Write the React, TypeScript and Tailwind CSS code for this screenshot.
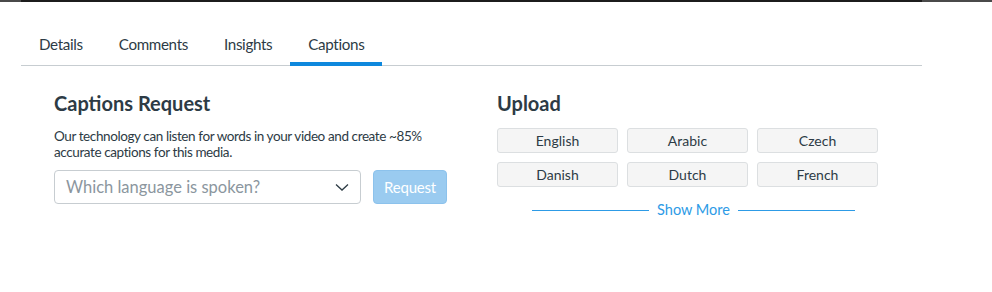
import React from 'react';

const tabs = ['Details', 'Comments', 'Insights', 'Captions'];
const languages = ['English', 'Arabic', 'Czech', 'Danish', 'Dutch', 'French'];

export default function App() {
  return (
    <div className="w-[992px] h-[292px] bg-white text-[#2d3b45] font-['Lato','Liberation_Sans',sans-serif]">
      <div className="flex h-[2px]">
        <div className="w-[21px] bg-[#4a4a4a]" />
        <div className="w-[901px] bg-[#1c1c1c]" />
        <div className="flex-1 bg-[#4a4a4a]" />
      </div>

      <div className="ml-[21px] w-[901px] mt-[26px] flex border-b border-[#c7cdd1]">
        {tabs.map((t) => {
          const active = t === 'Captions';
          return (
            <div
              key={t}
              className={
                active
                  ? 'px-[18px] pt-[6px] pb-[7px] text-[15.2px] tracking-[-0.35px] leading-[20px] border-b-4 border-[#0e88dd] -mb-[1px]'
                  : 'px-[18px] pt-[6px] pb-[11px] text-[15.2px] tracking-[-0.35px] leading-[20px]'
              }
            >
              {t}
            </div>
          );
        })}
      </div>

      <div className="flex pl-[54px] pt-[25px]">
        <div className="w-[393px]">
          <h2 className="text-[20px] font-bold leading-[24px]">Captions Request</h2>
          <p className="mt-[13px] text-[13.5px] tracking-[-0.4px] leading-[16px] w-[380px]">
            Our technology can listen for words in your video and create ~85% accurate captions for this media.
          </p>
          <div className="mt-[10px] flex gap-[12px]">
            <div className="w-[307px] h-[34px] border border-[#c7cdd1] rounded-[4px] flex items-center justify-between pl-[11px] pr-[10px]">
              <span className="text-[16.5px] text-[#8b969e]">Which language is spoken?</span>
              <svg width="16" height="16" viewBox="0 0 16 16" fill="none" stroke="#2d3b45" strokeWidth="1.3">
                <path d="M2 5.5 L8 11 L14 5.5" />
              </svg>
            </div>
            <div className="w-[74px] h-[34px] rounded-[4px] bg-[#9acbf0] border border-[#8cc2ec] text-white text-[15px] tracking-[-0.2px] flex items-center justify-center">
              Request
            </div>
          </div>
        </div>

        <div className="ml-[50px] w-[381px]">
          <h2 className="text-[20px] font-bold leading-[24px]">Upload</h2>
          <div className="mt-[13px] grid grid-cols-3 gap-[9px]">
            {languages.map((l) => (
              <div
                key={l}
                className="h-[25px] rounded-[3px] bg-[#f5f5f5] border border-[#dcdfe1] text-[14px] flex items-center justify-center"
              >
                {l}
              </div>
            ))}
          </div>
          <div className="mt-[13px] flex items-center pl-[35px] pr-[23px] gap-[8px]">
            <div className="flex-1 h-px bg-[#2d9be6]" />
            <span className="text-[14.5px] text-[#2d9be6] leading-[20px]">Show More</span>
            <div className="flex-1 h-px bg-[#2d9be6]" />
          </div>
        </div>
      </div>
    </div>
  );
}
